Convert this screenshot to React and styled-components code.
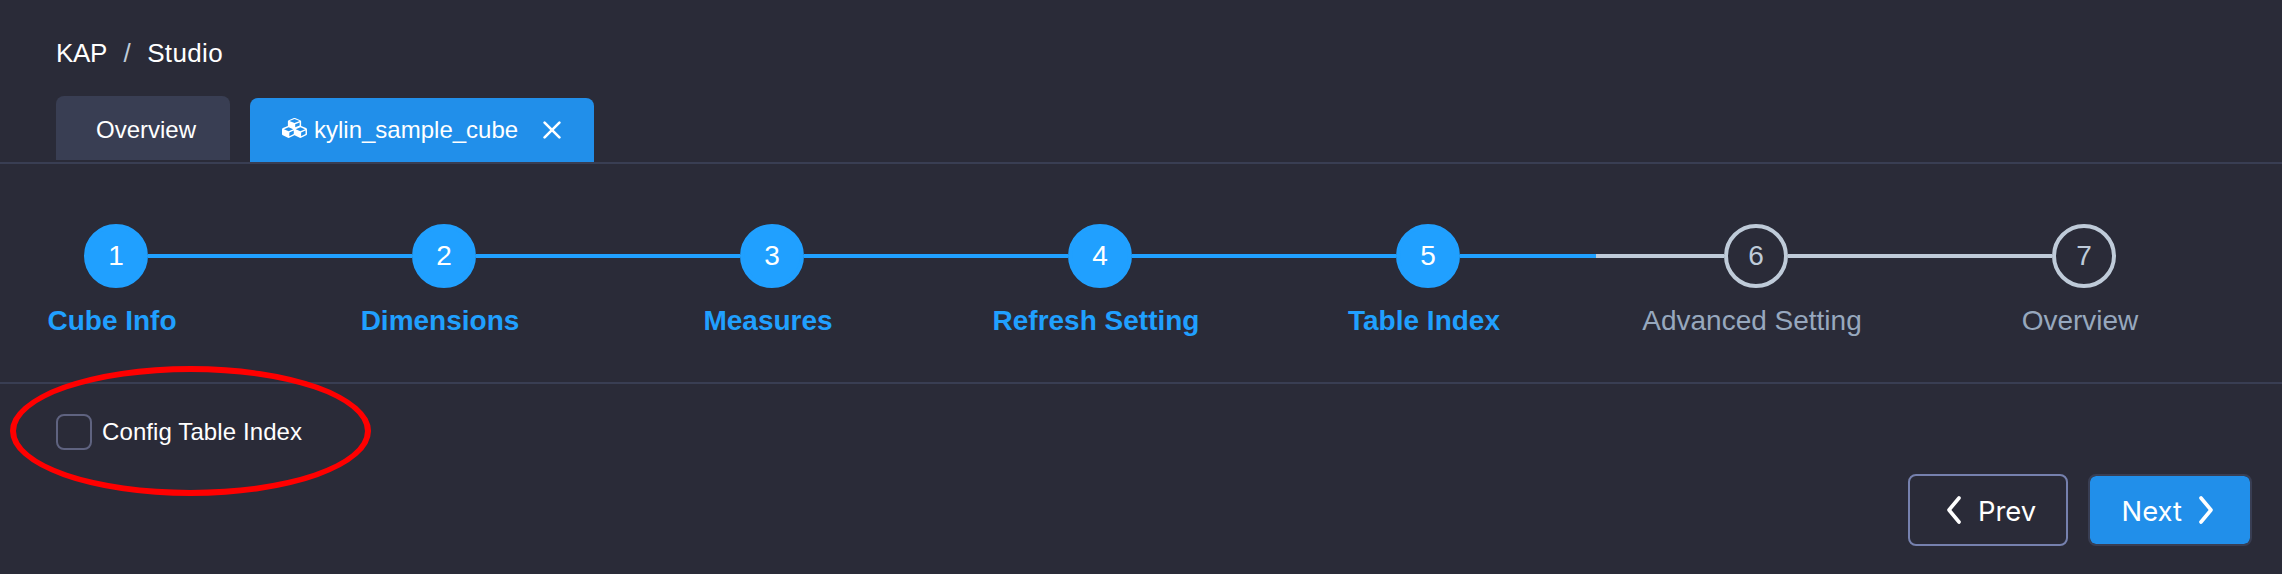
import React from 'react';
import styled, { createGlobalStyle } from 'styled-components';

const GlobalStyle = createGlobalStyle`
  * { box-sizing: border-box; }
  body { margin: 0; background: #2a2b38; }
`;

const Page = styled.div`
  width: 100%;
  height: 574px;
  overflow: hidden;
  background: #2a2b38;
  color: #fff;
  font-family: "Liberation Sans", Arial, sans-serif;
  font-size: 24px;
`;

const Breadcrumb = styled.nav`
  display: flex;
  height: 96px;
  padding: 38px 0 0 56px;
  font-size: 26px;
  line-height: 30px;
`;

const Crumb = styled.span`
  letter-spacing: ${(p) => p.$spacing || '0'};
`;

const Separator = styled.span`
  width: 40px;
  text-align: center;
  color: #bfcbd9;
`;

const TabBar = styled.div`
  display: flex;
  gap: 20px;
  height: 68px;
  padding-left: 56px;
  border-bottom: 2px solid #393e53;
`;

const Tab = styled.div`
  display: flex;
  align-items: center;
  height: 64px;
  width: ${(p) => (p.$active ? '344px' : '174px')};
  margin-top: ${(p) => (p.$active ? '2px' : '0')};
  padding: ${(p) => (p.$active ? '0 0 0 32px' : '4px 0 0 40px')};
  border-radius: 8px 8px 0 0;
  background: ${(p) => (p.$active ? '#218fea' : '#393e53')};
`;

const CubesIcon = styled.svg`
  width: 25px;
  height: 20px;
  margin-bottom: 4px;
  fill: #fff;
`;

const TabName = styled.span`
  margin: 0 25px 0 7px;
`;

const Stepper = styled.ol`
  display: flex;
  list-style: none;
  margin: 0;
  height: 220px;
  padding: 60px 0 0 84px;
  border-bottom: 2px solid #393e53;
`;

const Step = styled.li`
  flex: none;
  width: 328px;
`;

const StepHead = styled.div`
  display: flex;
  align-items: center;
`;

const StepCircle = styled.div`
  display: flex;
  align-items: center;
  justify-content: center;
  flex: none;
  width: 64px;
  height: 64px;
  border: 4px solid ${(p) => (p.$done ? '#20a0ff' : '#bfcbd9')};
  border-radius: 50%;
  background: ${(p) => (p.$done ? '#20a0ff' : 'transparent')};
  color: ${(p) => (p.$done ? '#fff' : '#bfcbd9')};
  font-size: 28px;
`;

const StepLine = styled.div`
  flex: 1;
  height: 4px;
  background: #bfcbd9;
`;

const StepProgress = styled.div`
  width: ${(p) => p.$width};
  height: 4px;
  background: #20a0ff;
`;

const StepLabel = styled.div`
  width: 300px;
  margin: 15px 0 0 -122px;
  text-align: center;
  font-size: 28px;
  line-height: 36px;
  font-weight: ${(p) => (p.$done ? 700 : 400)};
  color: ${(p) => (p.$done ? '#20a0ff' : '#97a8be')};
`;

const Option = styled.div`
  position: relative;
  display: flex;
  align-items: center;
  height: 90px;
  padding: 6px 0 0 56px;
  gap: 10px;
`;

const OptionText = styled.span`
  letter-spacing: 0.1px;
`;

const Checkbox = styled.span`
  width: 36px;
  height: 36px;
  border: 2px solid #5f6380;
  border-radius: 8px;
`;

const Highlight = styled.div`
  position: absolute;
  left: 10px;
  top: -18px;
  width: 361px;
  height: 130px;
  border: 6px solid #f00;
  border-radius: 50%;
`;

const Actions = styled.div`
  display: flex;
  justify-content: flex-end;
  gap: 20px;
  padding-right: 30px;
`;

const Button = styled.button`
  display: flex;
  align-items: center;
  justify-content: ${(p) => (p.$primary ? 'flex-end' : 'flex-start')};
  gap: 16px;
  width: ${(p) => (p.$primary ? '164px' : '160px')};
  height: 72px;
  padding: ${(p) => (p.$primary ? '0 36px 0 0' : '0 0 0 36px')};
  border: 2px solid ${(p) => (p.$primary ? '#393e53' : '#7681ae')};
  border-radius: 8px;
  background: ${(p) => (p.$primary ? '#218fea' : 'transparent')};
  background-clip: padding-box;
  color: #fff;
  font: 400 27.4px/32px Inter, sans-serif;
`;

const ButtonText = styled.span`
  padding-top: 1px;
`;

const STEPS = ['Cube Info', 'Dimensions', 'Measures', 'Refresh Setting', 'Table Index', 'Advanced Setting', 'Overview'];
const CURRENT = 4;

const Chevron = ({ d }) => (
  <svg width="16" height="30" viewBox="0 0 16 30" fill="none" stroke="#fff" strokeWidth="3.6" strokeLinecap="round" strokeLinejoin="round">
    <path d={d} />
  </svg>
);

const Cubes = () => (
  <CubesIcon viewBox="0 0 2176 1792" preserveAspectRatio="none">
    <path d="M640 1632l384-192v-314l-384 164v342zM576 1178l404-173-404-173-404 173zM1664 1632l384-192v-314l-384 164v342zM1600 1178l404-173-404-173-404 173zM1152 837l384-165v-266l-384 164v267zM1088 458l441-189-441-189-441 189zM2176 1024v416q0 36-19 67t-52 47l-448 224q-25 14-57 14t-57-14l-448-224q-4-2-7-4-2 2-7 4l-448 224q-25 14-57 14t-57-14l-448-224q-33-16-52-47t-19-67v-416q0-38 21.5-70t56.5-48l434-186v-400q0-38 21.5-70t56.5-48l448-192q23-10 50-10t50 10l448 192q35 16 56.5 48t21.5 70v400l434 186q36 16 57 48t21 70z" fillRule="evenodd" />
  </CubesIcon>
);

export default function App() {
  return (
    <Page>
      <GlobalStyle />
      <Breadcrumb>
        <Crumb $spacing="-0.3px">KAP</Crumb>
        <Separator>/</Separator>
        <Crumb $spacing="0.35px">Studio</Crumb>
      </Breadcrumb>
      <TabBar>
        <Tab>Overview</Tab>
        <Tab $active>
          <Cubes />
          <TabName>kylin_sample_cube</TabName>
          <svg width="18" height="18" viewBox="0 0 18 18" stroke="#fff" strokeWidth="2.6" strokeLinecap="round">
            <path d="M1.6 1.6 16.4 16.4M16.4 1.6 1.6 16.4" />
          </svg>
        </Tab>
      </TabBar>
      <Stepper>
        {STEPS.map((label, i) => (
          <Step key={label}>
            <StepHead>
              <StepCircle $done={i <= CURRENT}>{i + 1}</StepCircle>
              {i < STEPS.length - 1 && (
                <StepLine>
                  {i <= CURRENT && <StepProgress $width={i < CURRENT ? '100%' : '136px'} />}
                </StepLine>
              )}
            </StepHead>
            <StepLabel $done={i <= CURRENT}>{label}</StepLabel>
          </Step>
        ))}
      </Stepper>
      <Option>
        <Checkbox />
        <OptionText>Config Table Index</OptionText>
        <Highlight />
      </Option>
      <Actions>
        <Button>
          <Chevron d="M13 3 3 15 13 27" />
          <ButtonText>Prev</ButtonText>
        </Button>
        <Button $primary>
          <ButtonText>Next</ButtonText>
          <Chevron d="M3 3 13 15 3 27" />
        </Button>
      </Actions>
    </Page>
  );
}
